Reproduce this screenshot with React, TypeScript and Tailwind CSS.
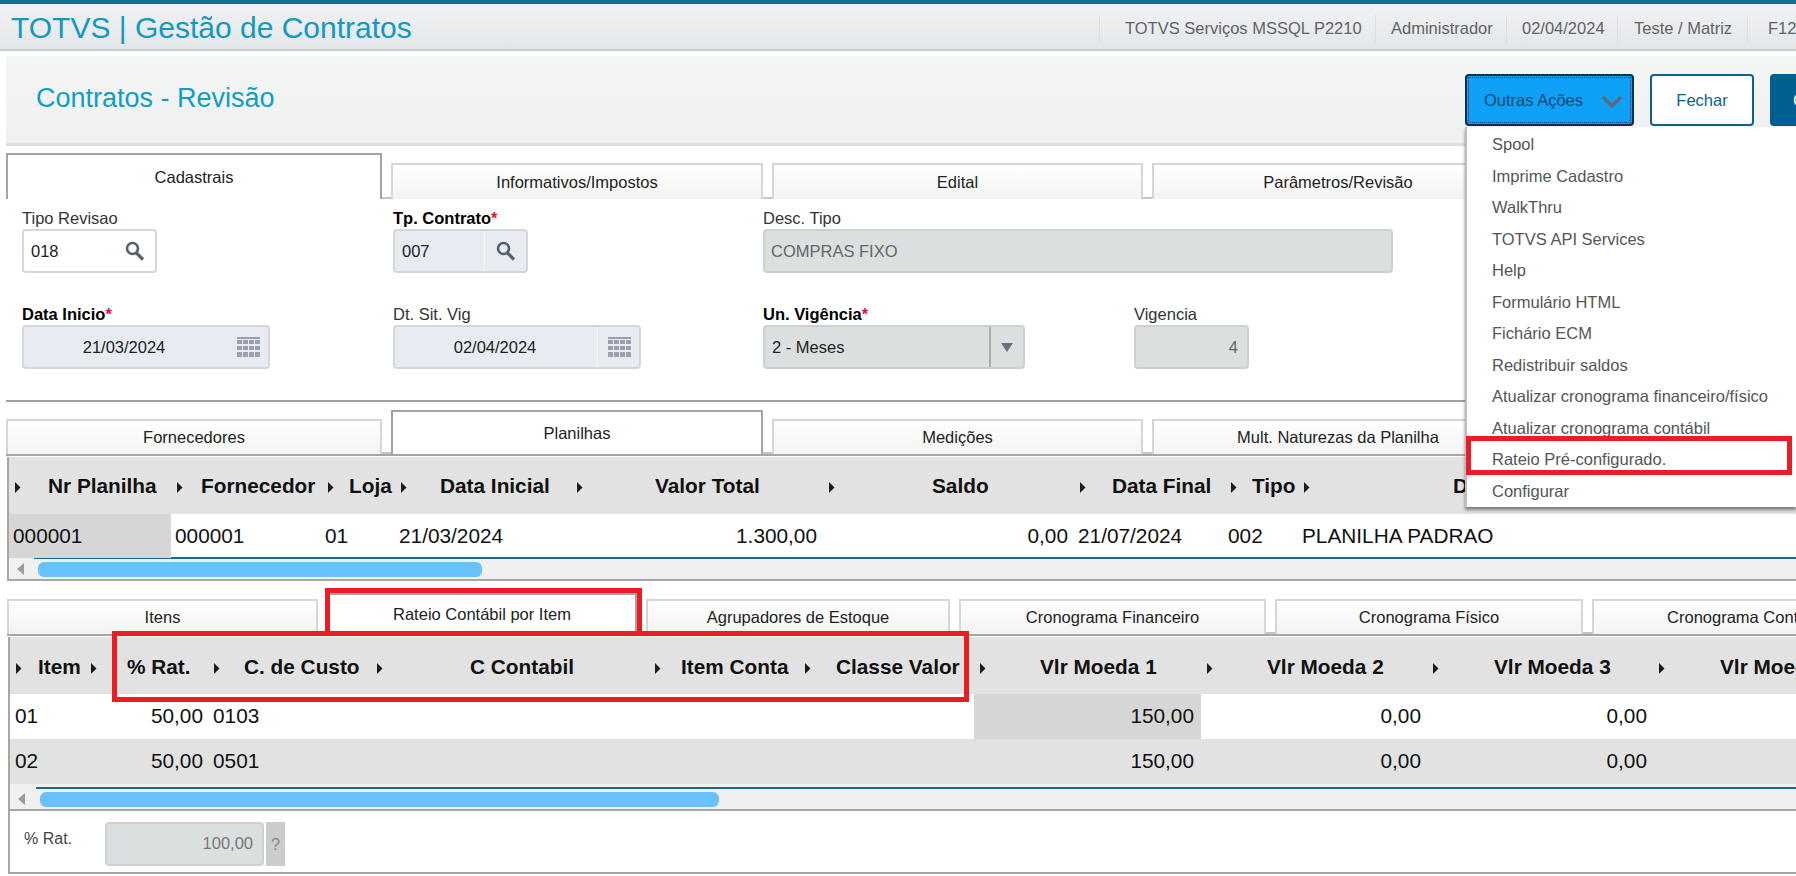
const menuItems = [
  "Spool",
  "Imprime Cadastro",
  "WalkThru",
  "TOTVS API Services",
  "Help",
  "Formulário HTML",
  "Fichário ECM",
  "Redistribuir saldos",
  "Atualizar cronograma financeiro/físico",
  "Atualizar cronograma contábil",
  "Rateio Pré-configurado.",
  "Configurar",
];

const topInfo = [
  { label: "TOTVS Serviços MSSQL P2210", cls: "w-[276px] pl-[25px]" },
  { label: "Administrador", cls: "w-[131px] pl-[15px]" },
  { label: "02/04/2024", cls: "w-[111px] pl-[15px]" },
  { label: "Teste / Matriz", cls: "w-[130px] pl-[16px]" },
  { label: "F12", cls: "w-[49px] pl-[20px]" },
];

const planilhaCols = "grid grid-cols-[162px_151px_73px_176px_252px_251px_151px_73px_498px]";
const planilhaHead = [
  { label: "Nr Planilha", cls: "ml-[27px]" },
  { label: "Fornecedor", cls: "ml-[18px]" },
  { label: "Loja", cls: "ml-[15px]" },
  { label: "Data Inicial", cls: "ml-[33px]" },
  { label: "Valor Total", cls: "ml-[72px]" },
  { label: "Saldo", cls: "ml-[97px]" },
  { label: "Data Final", cls: "ml-[26px]" },
  { label: "Tipo", cls: "ml-[15px]" },
  { label: "Descricao", cls: "ml-[143px]" },
];
const planilhaRow = [
  { label: "000001", cls: "pl-[4px] bg-[#d6d6d6]" },
  { label: "000001", cls: "pl-[4px]" },
  { label: "01", cls: "pl-[3px]" },
  { label: "21/03/2024", cls: "pl-[4px]" },
  { label: "1.300,00", cls: "pr-[6px] text-right" },
  { label: "0,00", cls: "pr-[6px] text-right" },
  { label: "21/07/2024", cls: "pl-[4px]" },
  { label: "002", cls: "pl-[3px]" },
  { label: "PLANILHA PADRAO", cls: "pl-[4px]" },
];

const rateioCols = "grid grid-cols-[75px_123px_163px_278px_150px_175px_227px_226px_226px_135px]";
const rateioHead = [
  { label: "Item", cls: "ml-[16px]" },
  { label: "% Rat.", cls: "ml-[30px]" },
  { label: "C. de Custo", cls: "ml-[24px]" },
  { label: "C Contabil", cls: "ml-[87px]" },
  { label: "Item Conta", cls: "ml-[20px]" },
  { label: "Classe Valor", cls: "ml-[25px]" },
  { label: "Vlr Moeda 1", cls: "ml-[54px]" },
  { label: "Vlr Moeda 2", cls: "ml-[54px]" },
  { label: "Vlr Moeda 3", cls: "ml-[55px]" },
  { label: "Vlr Moeda 4", cls: "ml-[55px]" },
];
const rateioRows = [
  { item: "01", custo: "0103", bg: "bg-white", cell: "bg-[#d6d6d6]" },
  { item: "02", custo: "0501", bg: "bg-[#e2e2e2]", cell: "" },
];

function SearchIcon() {
  return (
    <svg width="20" height="20" viewBox="0 0 20 20" fill="none" className="shrink-0">
      <circle cx="7.5" cy="7.5" r="5.5" stroke="#55606f" strokeWidth="2.6" />
      <path d="M11.5 12 L18 18.5" stroke="#55606f" strokeWidth="3.2" />
    </svg>
  );
}

function CalendarIcon() {
  return (
    <svg width="23" height="20" viewBox="0 0 23 20" className="shrink-0 ml-[2px]" fill="#9aa1ac">
      <rect x="0" y="0" width="23" height="2" />
      <rect x="0" y="3" width="5" height="4" />
      <rect x="6" y="3" width="5" height="4" />
      <rect x="12" y="3" width="5" height="4" />
      <rect x="18" y="3" width="5" height="4" />
      <rect x="0" y="9" width="5" height="4" />
      <rect x="6" y="9" width="5" height="4" />
      <rect x="12" y="9" width="5" height="4" />
      <rect x="18" y="9" width="5" height="4" />
      <rect x="0" y="15" width="5" height="5" />
      <rect x="6" y="15" width="5" height="5" />
      <rect x="12" y="15" width="5" height="5" />
      <rect x="18" y="15" width="5" height="5" />
    </svg>
  );
}

function SortArrow() {
  return (
    <svg width="7" height="11" viewBox="0 0 7 11" className="ml-[5px] mt-[3px] shrink-0" fill="#1c1c1c">
      <path d="M1 0 L6.5 5.5 L1 11 Z" />
    </svg>
  );
}

function Tabs({ tabs, tall, low, line }: { tabs: { label: string; w: string; active?: boolean }[]; tall: string; low: string; line?: boolean }) {
  return (
    <div className={`flex items-end ${line ? "border-b-2 border-[#a6a6a6]" : ""}`}>
      {tabs.map((t, i) => (
        <div key={t.label} className="flex items-end shrink-0">
          {i > 0 && <div className="w-[9px] h-[2px] bg-[#c4c4c4]" />}
          <div
            className={
              t.active
                ? `${t.w} ${tall} flex items-center justify-center bg-white border-2 border-b-0 border-[#a3a3a3]`
                : `${t.w} ${low} flex items-center justify-center bg-gradient-to-b from-white to-[#f3f3f3] border-2 border-b-0 border-[#d6d6d6]`
            }
          >
            {t.label}
          </div>
        </div>
      ))}
    </div>
  );
}

function Field({ label, bold, req, w, children }: { label: string; bold?: boolean; req?: boolean; w: string; children: React.ReactNode }) {
  return (
    <div className={`${w} shrink-0`}>
      <div className={`h-[21px] leading-[20px] ${bold ? "font-bold text-black" : "text-[#333]"}`}>
        {label}
        {req && <span className="text-[#e8112d]">*</span>}
      </div>
      {children}
    </div>
  );
}

function Scroll({ thumb, arrowGap, lineLeft }: { thumb: string; arrowGap: string; lineLeft: string }) {
  return (
    <div className="bg-[#f0f0f0] border-b-2 border-[#a6a6a6]">
      <div className={`${lineLeft} h-[2px] bg-[#1b6a94]`} />
      <div className="h-[20px] flex items-center pl-[8px]">
        <svg width="7" height="12" viewBox="0 0 7 12" fill="#9c9c9c" className="shrink-0">
          <path d="M7 0 L0 6 L7 12 Z" />
        </svg>
        <div className={`${arrowGap} ${thumb} h-[15px] rounded-md bg-[#6ac2fc]`} />
      </div>
    </div>
  );
}

export default function App() {
  return (
    <div className="relative w-[1796px] h-[876px] overflow-hidden bg-white font-['Liberation_Sans',Arial,sans-serif] text-[16.5px] text-[#222]">
      <div className="h-[4px] bg-[#0d7290]" />

      {/* top header */}
      <header className="h-[47px] flex items-center bg-gradient-to-b from-[#f1f2f4] to-[#e3e6e9] border-b-2 border-[#c9cccf]">
        <div className="w-[1099px] shrink-0 pl-[11px] pt-[2px] text-[30px] leading-none text-[#0f9bbf] whitespace-nowrap">
          TOTVS | Gestão de Contratos
        </div>
        {topInfo.map((t) => (
          <div key={t.label} className={`${t.cls} shrink-0 h-[28px] mt-[4px] flex items-center border-l border-[#dcdfe2] text-[#636363] whitespace-nowrap`}>
            {t.label}
          </div>
        ))}
      </header>

      {/* title and buttons */}
      <div className="mt-[5px] ml-[6px] h-[90px] flex bg-gradient-to-b from-[#f4f5f5] to-[#eff1f1] border-b-[3px] border-[#dedede] overflow-hidden">
        <div className="w-[1459px] shrink-0 pl-[30px] pt-[27px] text-[27px] leading-[30px] text-[#0f9ec4]">Contratos - Revisão</div>
        <div className="flex gap-[16px] pt-[18px] items-start">
          <button className="w-[169px] h-[52px] shrink-0 flex items-center pl-[17px] rounded-[4px] border-2 border-[#0a2f48] outline-1 outline-dotted -outline-offset-4 outline-[#0a3550] bg-[#0fa0f8] text-[#0c4a70]">
            Outras Ações
            <svg width="22" height="13" viewBox="0 0 22 13" fill="none" className="ml-[18px] mt-[3px]">
              <path d="M2 2 L11 11 L20 2" stroke="#5c6a74" strokeWidth="3.4" />
            </svg>
          </button>
          <button className="w-[104px] h-[52px] shrink-0 rounded-[4px] border-2 border-[#0b6190] bg-white text-[#0b6190]">Fechar</button>
          <button className="w-[110px] h-[52px] shrink-0 text-left pl-[23px] rounded-[4px] bg-[#005f91] text-white">Confirmar</button>
        </div>
      </div>

      {/* cadastrais */}
      <div className="mt-[7px] ml-[6px]">
        <Tabs
          tall="h-[46px]"
          low="h-[36px]"
          tabs={[
            { label: "Cadastrais", w: "w-[376px]", active: true },
            { label: "Informativos/Impostos", w: "w-[372px]" },
            { label: "Edital", w: "w-[371px]" },
            { label: "Parâmetros/Revisão", w: "w-[372px]" },
          ]}
        />
      </div>

      <div className="pl-[22px] pt-[9px] h-[201px] flex flex-col gap-[31px]">
        <div className="flex">
          <Field label="Tipo Revisao" w="w-[371px]">
            <div className="w-[135px] h-[44px] flex items-center justify-between pl-[7px] pr-[10px] rounded-[4px] border-2 border-[#d4d6d8] bg-white">
              018
              <SearchIcon />
            </div>
          </Field>
          <Field label="Tp. Contrato" bold req w="w-[370px]">
            <div className="w-[135px] h-[44px] flex items-center rounded-[4px] border-2 border-[#d4d6d8] bg-[#e8ebf2]">
              <div className="flex-1 pl-[7px]">007</div>
              <div className="w-[42px] h-full flex items-center justify-center border-l border-[#f5f6f8]">
                <SearchIcon />
              </div>
            </div>
          </Field>
          <Field label="Desc. Tipo" w="w-[630px]">
            <div className="w-[630px] h-[44px] flex items-center pl-[6px] rounded-[4px] border-2 border-[#cdd0d2] bg-[#dcdfe0] text-[#666]">COMPRAS FIXO</div>
          </Field>
        </div>
        <div className="flex">
          <Field label="Data Inicio" bold req w="w-[371px]">
            <div className="w-[248px] h-[44px] flex items-center rounded-[4px] border-2 border-[#d4d6d8] bg-[#e8ebf2]">
              <div className="flex-1 text-center pr-[2px]">21/03/2024</div>
              <div className="w-[42px] h-full flex items-center justify-center">
                <CalendarIcon />
              </div>
            </div>
          </Field>
          <Field label="Dt. Sit. Vig" w="w-[370px]">
            <div className="w-[248px] h-[44px] flex items-center rounded-[4px] border-2 border-[#d4d6d8] bg-[#e8ebf2]">
              <div className="flex-1 text-center pr-[2px]">02/04/2024</div>
              <div className="w-[42px] h-full flex items-center justify-center border-l border-[#f5f6f8]">
                <CalendarIcon />
              </div>
            </div>
          </Field>
          <Field label="Un. Vigência" bold req w="w-[371px]">
            <div className="w-[262px] h-[44px] flex items-center rounded-[4px] border-2 border-[#cdd0d2] bg-[#dcdfe0]">
              <div className="flex-1 pl-[7px]">2 - Meses</div>
              <div className="w-[34px] h-[40px] flex items-center justify-center border-l-2 border-[#a8b0b0]">
                <svg width="12" height="9" viewBox="0 0 12 9" fill="#6b7080">
                  <path d="M0 0 H12 L6 9 Z" />
                </svg>
              </div>
            </div>
          </Field>
          <Field label="Vigencia" w="w-[115px]">
            <div className="w-[115px] h-[44px] flex items-center justify-end pr-[9px] rounded-[4px] border-2 border-[#cdd0d2] bg-[#dcdfe0] text-[#666]">4</div>
          </Field>
        </div>
      </div>

      <div className="ml-[6px] h-[2px] bg-[#a0a0a0]" />

      {/* planilhas */}
      <div className="mt-[8px] ml-[6px]">
        <Tabs
          line
          tall="h-[44px]"
          low="h-[35px]"
          tabs={[
            { label: "Fornecedores", w: "w-[376px]" },
            { label: "Planilhas", w: "w-[372px]", active: true },
            { label: "Medições", w: "w-[371px]" },
            { label: "Mult. Naturezas da Planilha", w: "w-[372px]" },
          ]}
        />
      </div>

      <div className="ml-[7px] mt-[1px] border-l-2 border-[#a6a6a6] text-[20.8px] text-[#111]">
        <div className={`${planilhaCols} h-[57px] pt-[1px] bg-[#e2e2e2] font-bold`}>
          {planilhaHead.map((h) => (
            <div key={h.label} className="flex items-center whitespace-nowrap">
              <SortArrow />
              <span className={h.cls}>{h.label}</span>
            </div>
          ))}
        </div>
        <div className={`${planilhaCols} h-[43px] leading-[44px]`}>
          {planilhaRow.map((c, i) => (
            <div key={i} className={`${c.cls} whitespace-nowrap`}>
              {c.label}
            </div>
          ))}
        </div>
        <Scroll thumb="w-[444px]" arrowGap="ml-[14px]" lineLeft="ml-[25px]" />
      </div>

      {/* rateio */}
      <div className="mt-[12px] ml-[7px]">
        <Tabs
          line
          tall="h-[41px]"
          low="h-[35px]"
          tabs={[
            { label: "Itens", w: "w-[311px]" },
            { label: "Rateio Contábil por Item", w: "w-[310px]", active: true },
            { label: "Agrupadores de Estoque", w: "w-[304px]" },
            { label: "Cronograma Financeiro", w: "w-[307px]" },
            { label: "Cronograma Físico", w: "w-[308px]" },
            { label: "Cronograma Contábil", w: "w-[307px]" },
          ]}
        />
      </div>

      <div className="ml-[8px] mt-[1px] border-l-2 border-[#a6a6a6]">
        <div className="text-[20.8px] text-[#111]">
          <div className={`${rateioCols} h-[57px] pt-[2px] bg-[#e2e2e2] font-bold`}>
            {rateioHead.map((h) => (
              <div key={h.label} className="flex items-center whitespace-nowrap">
                <SortArrow />
                <span className={h.cls}>{h.label}</span>
              </div>
            ))}
          </div>
          {rateioRows.map((r) => (
            <div key={r.item} className={`${rateioCols} ${r.bg} h-[45px] leading-[44px]`}>
              <div className="pl-[5px]">{r.item}</div>
              <div className="pr-[5px] text-right">50,00</div>
              <div className="pl-[5px]">{r.custo}</div>
              <div />
              <div />
              <div />
              <div className={`pr-[7px] text-right ${r.cell}`}>150,00</div>
              <div className="pr-[6px] text-right">0,00</div>
              <div className="pr-[6px] text-right">0,00</div>
              <div />
            </div>
          ))}
          <div className="h-[3px] bg-[#f0f0f0]" />
          <Scroll thumb="w-[679px]" arrowGap="ml-[15px]" lineLeft="ml-[26px]" />
        </div>
        <div className="h-[63px] flex items-start pt-[11px] border-b-2 border-[#a6a6a6]">
          <div className="w-[95px] shrink-0 pl-[14px] pt-[5px] text-[16px] text-[#444]">% Rat.</div>
          <div className="w-[159px] h-[44px] shrink-0 flex items-center justify-end pr-[9px] pb-[2px] rounded-[4px] border-2 border-[#cdd0d2] bg-[#dcdfe0] text-[#777]">100,00</div>
          <div className="ml-[2px] w-[19px] h-[44px] shrink-0 flex items-center justify-center bg-[#cccccc] text-[#888]">?</div>
        </div>
      </div>

      {/* outras ações menu */}
      <div className="absolute left-[1465px] top-[127px] w-[331px] pt-[2px] border-l-2 border-[#bdbdbd] bg-white shadow-[0_3px_3px_rgba(0,0,0,0.45)] text-[#555]">
        {menuItems.map((m) => (
          <div key={m} className="h-[31.5px] pl-[25px] leading-[31.5px] whitespace-nowrap">
            {m}
          </div>
        ))}
      </div>

      {/* marcações em vermelho */}
      <div className="absolute left-[1466px] top-[436px] w-[326px] h-[39px] border-[5px] border-[#ed1c24]" />
      <div className="absolute left-[325px] top-[588px] w-[317px] h-[48px] border-[5px] border-[#ed1c24]" />
      <div className="absolute left-[112px] top-[631px] w-[857px] h-[71px] border-[5px] border-[#ed1c24]" />
    </div>
  );
}
